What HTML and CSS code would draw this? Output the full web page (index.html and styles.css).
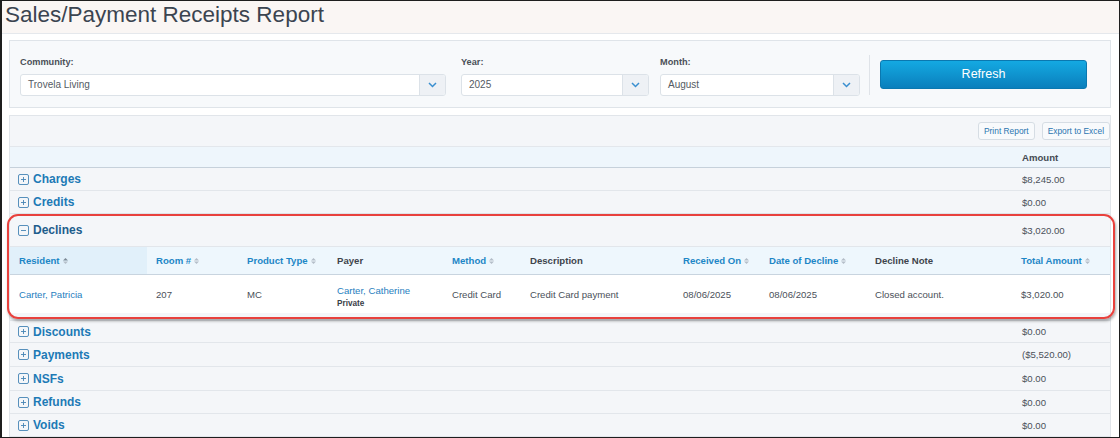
FILE: index.html
```html
<!DOCTYPE html>
<html lang="en">
<head>
    <meta charset="UTF-8">
    <title>Sales/Payment Receipts Report</title>
    <link rel="stylesheet" href="styles.css">
</head>
<body>
<div class="page">
    <header class="page-title">
        <h1>Sales/Payment Receipts Report</h1>
    </header>

    <section class="filters">
        <div class="field field-community">
            <label>Community:</label>
            <div class="select">
                <span class="select-value">Trovela Living</span>
                <span class="select-arrow"><svg width="9" height="6" viewBox="0 0 9 6"><path d="M1 1l3.5 3.5L8 1" fill="none" stroke="#3a8fd0" stroke-width="1.5"/></svg></span>
            </div>
        </div>
        <div class="field field-year">
            <label>Year:</label>
            <div class="select">
                <span class="select-value">2025</span>
                <span class="select-arrow"><svg width="9" height="6" viewBox="0 0 9 6"><path d="M1 1l3.5 3.5L8 1" fill="none" stroke="#3a8fd0" stroke-width="1.5"/></svg></span>
            </div>
        </div>
        <div class="field field-month">
            <label>Month:</label>
            <div class="select">
                <span class="select-value">August</span>
                <span class="select-arrow"><svg width="9" height="6" viewBox="0 0 9 6"><path d="M1 1l3.5 3.5L8 1" fill="none" stroke="#3a8fd0" stroke-width="1.5"/></svg></span>
            </div>
        </div>
        <div class="filter-divider"></div>
        <button class="btn-refresh">Refresh</button>
    </section>

    <section class="report">
        <div class="report-tools">
            <button class="btn-small">Print Report</button>
            <button class="btn-small">Export to Excel</button>
        </div>
        <div class="report-head">
            <span></span>
            <span>Amount</span>
        </div>

        <div class="group">
            <span class="group-name"><svg class="toggle" width="11" height="11" viewBox="0 0 11 11"><rect x=".5" y=".5" width="10" height="10" rx="1.5"/><path d="M3 5.5h5M5.5 3v5"/></svg>Charges</span>
            <span class="amount">$8,245.00</span>
        </div>
        <div class="group">
            <span class="group-name"><svg class="toggle" width="11" height="11" viewBox="0 0 11 11"><rect x=".5" y=".5" width="10" height="10" rx="1.5"/><path d="M3 5.5h5M5.5 3v5"/></svg>Credits</span>
            <span class="amount">$0.00</span>
        </div>

        <div class="group-open">
            <div class="group group-expanded">
                <span class="group-name"><svg class="toggle" width="11" height="11" viewBox="0 0 11 11"><rect x=".5" y=".5" width="10" height="10" rx="1.5"/><path d="M3 5.5h5"/></svg>Declines</span>
                <span class="amount">$3,020.00</span>
            </div>
            <div class="detail detail-head">
                <span class="sortable sorted">Resident <svg class="sort" width="5" height="8" viewBox="0 0 5 8"><path class="up" d="M0 3.5L2.5 1 5 3.5z"/><path d="M0 4.5L2.5 7 5 4.5z"/></svg></span>
                <span class="sortable">Room # <svg class="sort" width="5" height="8" viewBox="0 0 5 8"><path d="M0 3.5L2.5 1 5 3.5z"/><path d="M0 4.5L2.5 7 5 4.5z"/></svg></span>
                <span class="sortable">Product Type <svg class="sort" width="5" height="8" viewBox="0 0 5 8"><path d="M0 3.5L2.5 1 5 3.5z"/><path d="M0 4.5L2.5 7 5 4.5z"/></svg></span>
                <span>Payer</span>
                <span class="sortable">Method <svg class="sort" width="5" height="8" viewBox="0 0 5 8"><path d="M0 3.5L2.5 1 5 3.5z"/><path d="M0 4.5L2.5 7 5 4.5z"/></svg></span>
                <span>Description</span>
                <span class="sortable">Received On <svg class="sort" width="5" height="8" viewBox="0 0 5 8"><path d="M0 3.5L2.5 1 5 3.5z"/><path d="M0 4.5L2.5 7 5 4.5z"/></svg></span>
                <span class="sortable">Date of Decline <svg class="sort" width="5" height="8" viewBox="0 0 5 8"><path d="M0 3.5L2.5 1 5 3.5z"/><path d="M0 4.5L2.5 7 5 4.5z"/></svg></span>
                <span>Decline Note</span>
                <span class="sortable">Total Amount <svg class="sort" width="5" height="8" viewBox="0 0 5 8"><path d="M0 3.5L2.5 1 5 3.5z"/><path d="M0 4.5L2.5 7 5 4.5z"/></svg></span>
            </div>
            <div class="detail detail-row">
                <span class="link">Carter, Patricia</span>
                <span>207</span>
                <span>MC</span>
                <span class="payer"><span class="link">Carter, Catherine</span><b>Private</b></span>
                <span>Credit Card</span>
                <span>Credit Card payment</span>
                <span>08/06/2025</span>
                <span>08/06/2025</span>
                <span>Closed account.</span>
                <span>$3,020.00</span>
            </div>
        </div>

        <div class="group group-short">
            <span class="group-name"><svg class="toggle" width="11" height="11" viewBox="0 0 11 11"><rect x=".5" y=".5" width="10" height="10" rx="1.5"/><path d="M3 5.5h5M5.5 3v5"/></svg>Discounts</span>
            <span class="amount">$0.00</span>
        </div>
        <div class="group group-tall">
            <span class="group-name"><svg class="toggle" width="11" height="11" viewBox="0 0 11 11"><rect x=".5" y=".5" width="10" height="10" rx="1.5"/><path d="M3 5.5h5M5.5 3v5"/></svg>Payments</span>
            <span class="amount">($5,520.00)</span>
        </div>
        <div class="group group-tall">
            <span class="group-name"><svg class="toggle" width="11" height="11" viewBox="0 0 11 11"><rect x=".5" y=".5" width="10" height="10" rx="1.5"/><path d="M3 5.5h5M5.5 3v5"/></svg>NSFs</span>
            <span class="amount">$0.00</span>
        </div>
        <div class="group">
            <span class="group-name"><svg class="toggle" width="11" height="11" viewBox="0 0 11 11"><rect x=".5" y=".5" width="10" height="10" rx="1.5"/><path d="M3 5.5h5M5.5 3v5"/></svg>Refunds</span>
            <span class="amount">$0.00</span>
        </div>
        <div class="group">
            <span class="group-name"><svg class="toggle" width="11" height="11" viewBox="0 0 11 11"><rect x=".5" y=".5" width="10" height="10" rx="1.5"/><path d="M3 5.5h5M5.5 3v5"/></svg>Voids</span>
            <span class="amount">$0.00</span>
        </div>
    </section>
</div>
</body>
</html>
```

FILE: styles.css
```css
/* Reset */
* {
    margin: 0;
    padding: 0;
    box-sizing: border-box;
}

body {
    font-family: "Liberation Sans", Arial, sans-serif;
    font-size: 9.6px;
    color: #444b55;
    background: #fff;
}

.page {
    width: 1120px;
    height: 438px;
    border: 1px solid #1e1e1e;
    border-left-width: 2px;
    overflow: hidden;
    background: #fff;
}

/* Title bar */
.page-title {
    height: 33px;
    background: #faf6f4;
    border-bottom: 1px solid #e5e8ec;
    padding-left: 3px;
}

.page-title h1 {
    font-weight: normal;
    font-size: 22.5px;
    line-height: 28px;
    color: #3b4450;
}

/* Filter panel */
.filters {
    display: flex;
    align-items: center;
    margin: 6px 8px 0 7px;
    height: 68px;
    padding: 0 10px;
    background: #f7f9fb;
    border: 1px solid #dfe4e9;
}

.field label {
    display: block;
    font-weight: bold;
    font-size: 9.2px;
    line-height: 14px;
    margin-bottom: 5px;
    padding-top: 2px;
    color: #4a5058;
}

.field-community { width: 426px; margin-right: 15px; }
.field-year { width: 188px; margin-right: 11px; }
.field-month { width: 200px; margin-right: 9px; }

.select {
    display: flex;
    height: 22px;
    background: #fff;
    border: 1px solid #dce2e8;
    border-radius: 3px;
    overflow: hidden;
}

.select-value {
    flex: 1;
    padding-left: 7px;
    line-height: 20px;
    font-size: 10px;
    color: #555b63;
}

.select-arrow {
    width: 26px;
    display: flex;
    align-items: center;
    justify-content: center;
    background: #eef1f5;
    border-left: 1px solid #dce2e8;
}

.filter-divider {
    width: 1px;
    height: 40px;
    background: #dfe3e8;
    margin-right: 10px;
    margin-top: 2px;
}

.btn-refresh {
    width: 207px;
    height: 29px;
    border: 1px solid #0a78b0;
    border-radius: 3px;
    background: linear-gradient(#14a9e2, #0a7fbc);
    color: #fff;
    font-family: inherit;
    font-size: 12.5px;
}

/* Report panel */
.report {
    margin: 7px 8px 0 7px;
    height: 400px;
    background: #f4f6f9;
    border: 1px solid #e1e5ea;
    border-bottom: none;
}

.report-tools {
    display: flex;
    justify-content: flex-end;
    gap: 7px;
    padding: 6px 0 6px;
    border-bottom: 1px solid #e3e7ec;
}

.btn-small {
    height: 18px;
    padding: 0 5px;
    border: 1px solid #d6dde4;
    border-radius: 3px;
    background: #f8fafc;
    color: #2a75b0;
    font-family: inherit;
    font-size: 8.4px;
}

.report-head,
.group {
    display: grid;
    grid-template-columns: 1fr 88px;
    align-items: center;
}

.report-head {
    height: 21px;
    background: #eef6fc;
    border-bottom: 1px solid #c6d1db;
    font-weight: bold;
    font-size: 9.6px;
    color: #454b53;
}

.group {
    height: 23px;
    border-bottom: 1px solid #e2e6eb;
    padding-left: 8px;
}

.group-short {
    height: 22px;
}

.group-tall {
    height: 24px;
}

.group-name {
    display: flex;
    align-items: center;
    gap: 4px;
    font-weight: bold;
    font-size: 12px;
    color: #1d7ab6;
}

.toggle rect,
.toggle path {
    fill: none;
    stroke: #4584b4;
    stroke-width: 0.9;
}

.amount {
    color: #4a5059;
}

/* Expanded group */
.group-open {
    position: relative;
    padding-bottom: 7px;
    border-bottom: 1px solid #e2e6eb;
}

.group-open::after {
    content: "";
    position: absolute;
    top: 0;
    bottom: 1px;
    left: -3px;
    right: -5px;
    border: 2px solid #e8413d;
    border-radius: 11px;
    box-shadow: 1px 2px 3px rgba(0, 0, 0, 0.35);
    pointer-events: none;
}

.group-expanded {
    height: 33px;
}

.group-expanded .group-name {
    color: #1e5d8c;
}

.detail {
    display: grid;
    grid-template-columns: 137px 91px 90px 115px 78px 153px 86px 106px 146px 97px;
    align-items: center;
}

.detail > span {
    padding-left: 9px;
}

.detail-head {
    height: 28px;
    background: #eef7fd;
    border-bottom: 1px solid #c8d4df;
    font-weight: bold;
    font-size: 9.6px;
    color: #3e444c;
}

.detail-head > span {
    height: 100%;
    display: flex;
    align-items: center;
    gap: 3px;
}

.detail-head .sortable {
    color: #1d86c6;
}

.detail-head .sorted {
    background: #e1f0fa;
}

.sort path {
    fill: #b4bec8;
}

.sort .up {
    fill: #7d8a97;
}

.detail-row {
    height: 38px;
    background: #fff;
    color: #4a5059;
}

.link {
    color: #1f80c0;
}

.payer {
    display: flex;
    flex-direction: column;
    gap: 3px;
    padding-top: 4px;
}

.payer b {
    font-size: 8.2px;
    color: #3a4048;
}
```
